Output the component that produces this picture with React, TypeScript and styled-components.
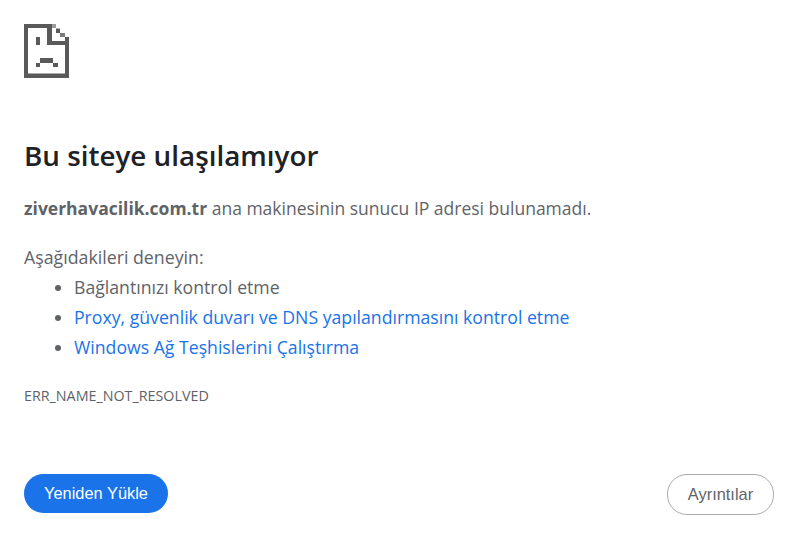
import React from "react";
import styled, { createGlobalStyle } from "styled-components";

const Global = createGlobalStyle`
  html, body { margin: 0; padding: 0; background: #fff; }
  body { font-family: "Open Sans", "Noto Sans", sans-serif; color: #5f6368; }
`;

const Page = styled.div`
  width: 787px;
  height: 541px;
  box-sizing: border-box;
  padding: 24px 13px 26px 24px;
  display: flex;
  flex-direction: column;
  overflow: hidden;
`;

const IconBox = styled.svg`
  display: block;
  width: 45px;
  height: 54px;
  flex: none;
  fill: #5a5a5a;
`;

const Title = styled.h1`
  margin: 59px 0 0;
  font-size: 27.8px;
  line-height: 36px;
  font-weight: 600;
  color: #202124;
`;

const Summary = styled.p`
  margin: 23px 0 0;
  font-size: 17.5px;
  line-height: 24px;
  strong { font-weight: 700; }
`;

const Suggest = styled.p`
  margin: 22px 0 0;
  font-size: 17.75px;
  line-height: 30px;
`;

const List = styled.ul`
  margin: 0;
  padding: 0 0 0 50px;
  font-size: 17.66px;
  line-height: 30px;
`;

const Item = styled.li<{ $link?: boolean }>`
  color: #5f6368;
  & > span { color: ${(p) => (p.$link ? "#1a73e8" : "inherit")}; }
`;

const Code = styled.div`
  margin-top: 25px;
  font-size: 14.3px;
  line-height: 18px;
  text-transform: uppercase;
`;

const Actions = styled.div`
  margin-top: 69px;
  display: flex;
  justify-content: space-between;
  align-items: flex-start;
`;

const BaseButton = styled.button`
  font-family: "Liberation Sans", Arial, sans-serif;
  font-size: 16.4px;
  font-weight: 400;
  border-radius: 20px;
  cursor: pointer;
  box-sizing: border-box;
  padding: 0;
`;

const Primary = styled(BaseButton)`
  width: 144px;
  height: 39px;
  border: none;
  background: #1a73e8;
  color: #fff;
`;

const Secondary = styled(BaseButton)`
  width: 107px;
  height: 41px;
  border: 1px solid #a8abb0;
  background: #fff;
  color: #5f6368;
`;

const SadTab = () => (
  <IconBox viewBox="0 0 45 54" aria-hidden="true">
    <rect x="0" y="0" width="4" height="54" />
    <rect x="0" y="0" width="28" height="4" />
    <rect x="0" y="49.5" width="45" height="4.5" />
    <rect x="41" y="13" width="4" height="41" />
    <rect x="23" y="0" width="5" height="21" />
    <rect x="23" y="17" width="22" height="4" />
    <rect x="28" y="0" width="4" height="4" opacity="0.6" />
    <rect x="32" y="4.5" width="4" height="4.5" />
    <rect x="36" y="9" width="5" height="4" opacity="0.8" />
    <rect x="12" y="13" width="4" height="8" />
    <rect x="16" y="34" width="13" height="5" />
    <rect x="12" y="39" width="4" height="4" />
    <rect x="29" y="39" width="5" height="4" />
  </IconBox>
);

export default function App() {
  return (
    <Page>
      <Global />
      <SadTab />
      <Title>Bu siteye ulaşılamıyor</Title>
      <Summary>
        <strong>ziverhavacilik.com.tr</strong> ana makinesinin sunucu IP adresi bulunamadı.
      </Summary>
      <Suggest>Aşağıdakileri deneyin:</Suggest>
      <List>
        <Item><span>Bağlantınızı kontrol etme</span></Item>
        <Item $link><span>Proxy, güvenlik duvarı ve DNS yapılandırmasını kontrol etme</span></Item>
        <Item $link><span>Windows Ağ Teşhislerini Çalıştırma</span></Item>
      </List>
      <Code>ERR_NAME_NOT_RESOLVED</Code>
      <Actions>
        <Primary>Yeniden Yükle</Primary>
        <Secondary>Ayrıntılar</Secondary>
      </Actions>
    </Page>
  );
}
